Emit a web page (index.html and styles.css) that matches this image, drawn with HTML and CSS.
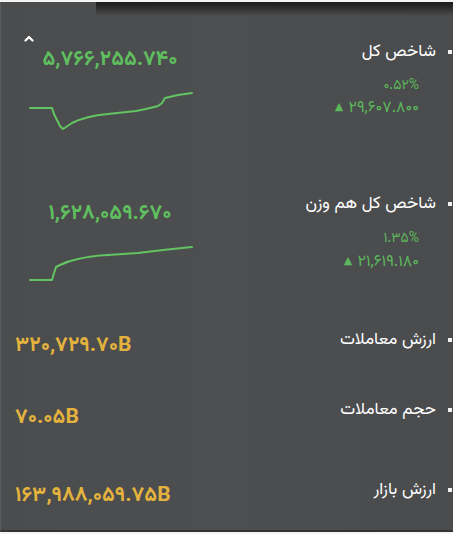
FILE: index.html
```html
<!DOCTYPE html>
<html lang="fa">
<head>
<meta charset="utf-8">
<link rel="stylesheet" href="styles.css">
</head>
<body>
<div class="page">
  <div class="topline"></div>
  <div class="panel">
    <div class="shade"></div>
    <div class="caret">
      <svg width="10" height="7" viewBox="0 0 10 7"><path d="M1.5 5.5 L5 2 L8.5 5.5" fill="none" stroke="#fff" stroke-width="2.2" stroke-linecap="round" stroke-linejoin="round"/></svg>
    </div>

    <div class="row row-index">
      <div class="left">
        <div class="val green">۵,۷۶۶,۲۵۵.۷۴۰</div>
        <svg class="spark" width="170" height="46" viewBox="0 0 170 46">
          <path d="M2 18 L24 18 L26 24 L32 36 L35 39 L44 33 Q58 26 80 24 L108 21 L118 19 L130 16 L134 13 L137 8 L150 5 L164 3" fill="none" stroke="#62c462" stroke-width="2" stroke-linejoin="round" stroke-linecap="round"/>
        </svg>
      </div>
      <div class="right">
        <div class="label">شاخص کل</div>
        <div class="sub pct">۰.۵۲%</div>
        <div class="sub chg"><span class="tri">▲</span> ۲۹,۶۰۷.۸۰۰</div>
      </div>
    </div>

    <div class="row row-index2">
      <div class="left">
        <div class="val green">۱,۶۲۸,۰۵۹.۶۷۰</div>
        <svg class="spark" width="170" height="46" viewBox="0 0 170 46">
          <path d="M2 41 L24 41 L26 34 L28 28 L32 26 Q40 22 50 20 Q62 17 80 16 L110 14 L135 11 L164 8" fill="none" stroke="#62c462" stroke-width="2" stroke-linejoin="round" stroke-linecap="round"/>
        </svg>
      </div>
      <div class="right">
        <div class="label">شاخص کل هم وزن</div>
        <div class="sub pct">۱.۳۵%</div>
        <div class="sub chg"><span class="tri">▲</span> ۲۱,۶۱۹.۱۸۰</div>
      </div>
    </div>

    <div class="row row-simple r3">
      <div class="left"><div class="val gold">۳۲۰,۷۲۹.۷۰B</div></div>
      <div class="right"><div class="label">ارزش معاملات</div></div>
    </div>

    <div class="row row-simple r4">
      <div class="left"><div class="val gold">۷۰.۰۵B</div></div>
      <div class="right"><div class="label">حجم معاملات</div></div>
    </div>

    <div class="row row-simple r5">
      <div class="left"><div class="val gold">۱۶۳,۹۸۸,۰۵۹.۷۵B</div></div>
      <div class="right"><div class="label">ارزش بازار</div></div>
    </div>
  </div>
  <div class="bottomline"></div>
</div>
</body>
</html>
```

FILE: styles.css
```css
html, body {
  margin: 0;
  padding: 0;
  background: #ffffff;
}
.page {
  width: 453px;
  height: 534px;
  display: flex;
  flex-direction: column;
  font-family: "Vazirmatn", "DejaVu Sans", sans-serif;
}
.topline {
  height: 2px;
  background: #f4f4f4;
}
.panel {
  position: relative;
  flex: 1;
  background: linear-gradient(90deg, #4b4c4d 0%, #4d4e4f 50%, #4a4b4c 100%);
  border-left: 1px solid #5a5b5c;
  border-bottom: 2px solid #333435;
  overflow: hidden;
}
.shade {
  position: absolute;
  top: 0;
  left: 95px;
  right: 0;
  height: 14px;
  background: linear-gradient(180deg, #1c1c1c 0%, #2a2a2a 35%, rgba(75,76,77,0) 100%);
}
.bottomline {
  height: 2px;
  background: #f4f4f4;
}
.caret {
  height: 7px;
  padding: 24px 0 0 23px;
}
.row {
  display: flex;
  justify-content: space-between;
  align-items: flex-start;
}
.left {
  display: flex;
  flex-direction: column;
}
.right {
  display: flex;
  flex-direction: column;
  align-items: flex-end;
}
.label {
  position: relative;
  color: #ffffff;
  font-size: 17px;
  line-height: 24px;
  direction: rtl;
  padding-right: 17px;
}
.label::after {
  content: "";
  position: absolute;
  right: 1px;
  top: 10px;
  width: 4px;
  height: 4px;
  background: #f2f2f2;
}
.val {
  font-weight: 700;
  font-size: 21px;
  line-height: 26px;
  white-space: nowrap;
}
.green { color: #5fbf5f; }
.gold { color: #e3b33e; }
.sub {
  color: #5cb85c;
  font-size: 14px;
  line-height: 16px;
  padding-right: 34px;
  direction: ltr;
}
.sub.chg { font-size: 16px; line-height: 18px; }
.tri { font-size: 11px; vertical-align: 2px; margin-right: 1px; }

.row-index {
  margin-top: 7px;
  height: 152px;
}
.row-index .left,
.row-index2 .left {
  width: 162px;
  margin-left: 28px;
  align-items: center;
}
.row-index .val { margin-top: 7px; }
.spark { margin-top: 17px; margin-left: 6px; }
.row-index .pct { margin-top: 14px; }
.row-index .chg { margin-top: 5px; }

.row-index2 {
  height: 136px;
}
.row-index2 .val { margin-top: 9px; }
.row-index2 .spark { margin-top: 12px; }
.row-index2 .pct { margin-top: 15px; }
.row-index2 .chg { margin-top: 6px; }

.row-simple .left { padding-left: 14px; }
.row-simple .val { margin-top: 5px; }
.r3 { height: 70px; }
.r4 { height: 80px; }
.r4 .val { margin-top: 7px; }
.r5 { height: 50px; }
```
